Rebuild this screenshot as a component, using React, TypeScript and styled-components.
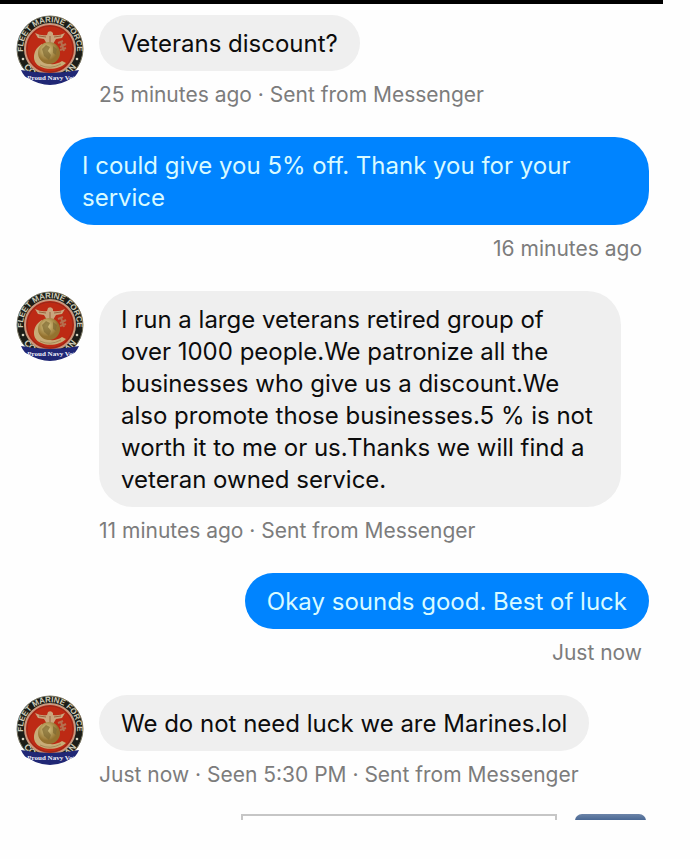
import React from "react";
import styled, { createGlobalStyle } from "styled-components";

const GlobalStyle = createGlobalStyle`
  * { box-sizing: border-box; }
  body {
    margin: 0;
    background: #fefefe;
    font-family: Inter, "Liberation Sans", sans-serif;
  }
`;

const Page = styled.main`
  padding-right: 37px;
`;

const TopBar = styled.header`
  height: 4px;
  background: #000;
`;

const Thread = styled.ol`
  list-style: none;
  margin: 0;
  padding: 11px 14px 0 16px;
  display: flex;
  flex-direction: column;
  gap: 28px;
`;

const Message = styled.li<{ $own?: boolean }>`
  display: flex;
  justify-content: ${(p) => (p.$own ? "flex-end" : "flex-start")};
  gap: 15px;
`;

const Content = styled.div<{ $own?: boolean }>`
  display: flex;
  flex-direction: column;
  align-items: ${(p) => (p.$own ? "flex-end" : "flex-start")};
  gap: 10px;
`;

const Bubble = styled.p<{ $own?: boolean; $wide?: boolean }>`
  margin: 0;
  padding: 13px 22px 11px;
  ${(p) => (p.$wide ? (p.$own ? "width: 589px;" : "width: 522px;") : "")}
  max-width: 100%;
  border-radius: ${(p) => (p.$wide ? "34px" : "28px")};
  background: ${(p) => (p.$own ? "#0084ff" : "#efefef")};
  color: ${(p) => (p.$own ? "#d8faff" : "#0c0c0c")};
  font-size: 24px;
  line-height: 32px;
  white-space: pre-line;
`;

const Meta = styled.div<{ $own?: boolean }>`
  padding-right: ${(p) => (p.$own ? "7px" : "0")};
  color: #7c7c7c;
  font-size: 21px;
  line-height: 28px;
`;

const AvatarArt = styled.svg`
  flex: none;
  width: 68px;
  height: 70px;
  display: block;
`;

const Composer = styled.form`
  height: 6px;
  margin-top: 25px;
  padding: 0 17px 0 241px;
  display: flex;
  gap: 18px;
  overflow: hidden;
`;

const Field = styled.input`
  flex: 1;
  min-width: 0;
  height: 44px;
  border: 2px solid #c6c6c6;
  background: #fff;
  outline: none;
`;

const SendButton = styled.button`
  width: 71px;
  height: 44px;
  border: 0;
  border-radius: 7px;
  background: linear-gradient(#6c84a8, #4a6894 6px);
`;

function Avatar({ id }: { id: string }) {
  return (
    <AvatarArt viewBox="0 0 68 70" role="img" aria-label="Fleet Marine Force">
      <defs>
        <path id={`${id}-top`} d="M8 41.5 A27 27 0 1 1 60 41.5" />
        <path id={`${id}-low`} d="M2 34 A32 32 0 0 0 66 34" />
        <radialGradient id={`${id}-gold`} cx="40%" cy="35%">
          <stop offset="0" stopColor="#dccb8c" />
          <stop offset="1" stopColor="#94722f" />
        </radialGradient>
        <clipPath id={`${id}-ribbon`}>
          <path d="M5 55 Q34 61 63 55 Q60 62 56 63 Q34 77 12 63 Q8 62 5 55 Z" />
        </clipPath>
      </defs>
      <circle cx="34" cy="34" r="33" fill="#1c1d18" stroke="#77745f" strokeWidth="1" />
      <g fill="#cfccb8" fontFamily="Liberation Sans, sans-serif" fontWeight="700">
        <text fontSize="8">
          <textPath href={`#${id}-top`} startOffset="50%" textAnchor="middle">
            FLEET MARINE FORCE
          </textPath>
        </text>
        <text fontSize="9">
          <textPath href={`#${id}-low`} startOffset="19%">CO</textPath>
        </text>
        <text fontSize="9">
          <textPath href={`#${id}-low`} startOffset="81%" textAnchor="end">AN</textPath>
        </text>
      </g>
      <circle cx="7" cy="44" r="1.3" fill="#d5d2bf" />
      <circle cx="61" cy="44" r="1.3" fill="#d5d2bf" />
      <circle cx="34" cy="34" r="25" fill="#bd2a14" stroke="#c79a80" strokeWidth="2" />
      <circle cx="34" cy="34" r="23" fill="none" stroke="#96281a" strokeWidth="1" />
      <path
        d="M19 18 Q25 21 31 20 L32 17 Q35 15 37 18 L37 20 Q43 21 49 18 L46 23 L40 24 L37 29 L31 29 L28 24 L22 23 Z"
        fill="#c9a57d"
      />
      <path d="M23 21 L30 22 M45 21 L38 22 M34 21 L34 28" stroke="#98643f" strokeWidth="1" />
      <path
        d="M26 29 C17 34 15 46 23 51 C32 56 44 54 50 48 L46 46 C40 50 34 50 28 47 C21 43 22 36 27 32 Z"
        fill="#c8ac77"
      />
      <circle cx="33" cy="38" r="11" fill={`url(#${id}-gold)`} />
      <path
        d="M26 34 L30 30 L34 32 L32 36 L35 40 L33 45 L28 41 Z M37 31 L41 34 L40 40 L37 38 Z"
        fill="#7d6831"
        opacity="0.7"
      />
      <path d="M42 28 L47 26 M44 32 L50 29 M44 35 L50 33 M45 27 L48 36" stroke="#b5704f" strokeWidth="2" />
      <path d="M24 50 Q34 55 45 49" fill="none" stroke="#a58b58" strokeWidth="1" />
      <g clipPath={`url(#${id}-ribbon)`}>
        <rect y="54" width="68" height="16" fill="#202775" />
        <text
          x="35"
          y="65"
          textAnchor="middle"
          fill="#f0f0fa"
          fontFamily="Liberation Serif, serif"
          fontWeight="700"
          fontSize="7"
        >
          Proud Navy Vet
        </text>
      </g>
    </AvatarArt>
  );
}

type Entry = { text: string; meta: string; own?: boolean; wide?: boolean };

const entries: Entry[] = [
  { text: "Veterans discount?", meta: "25 minutes ago · Sent from Messenger" },
  {
    text: "I could give you 5% off. Thank you for your\nservice",
    meta: "16 minutes ago",
    own: true,
    wide: true,
  },
  {
    text:
      "I run a large veterans retired group of\nover 1000 people.We patronize all the\nbusinesses who give us a discount.We\nalso promote those businesses.5 % is not\nworth it to me or us.Thanks we will find a\nveteran owned service.",
    meta: "11 minutes ago · Sent from Messenger",
    wide: true,
  },
  { text: "Okay sounds good. Best of luck", meta: "Just now", own: true },
  {
    text: "We do not need luck we are Marines.lol",
    meta: "Just now · Seen 5:30 PM · Sent from Messenger",
  },
];

export default function App() {
  return (
    <>
      <GlobalStyle />
      <Page>
        <TopBar />
        <Thread>
          {entries.map((e, i) => (
            <Message key={i} $own={e.own}>
              {!e.own && <Avatar id={`emblem${i}`} />}
              <Content $own={e.own}>
                <Bubble $own={e.own} $wide={e.wide}>{e.text}</Bubble>
                <Meta $own={e.own}>{e.meta}</Meta>
              </Content>
            </Message>
          ))}
        </Thread>
        <Composer>
          <Field aria-label="Message" />
          <SendButton type="button" aria-label="Send" />
        </Composer>
      </Page>
    </>
  );
}
